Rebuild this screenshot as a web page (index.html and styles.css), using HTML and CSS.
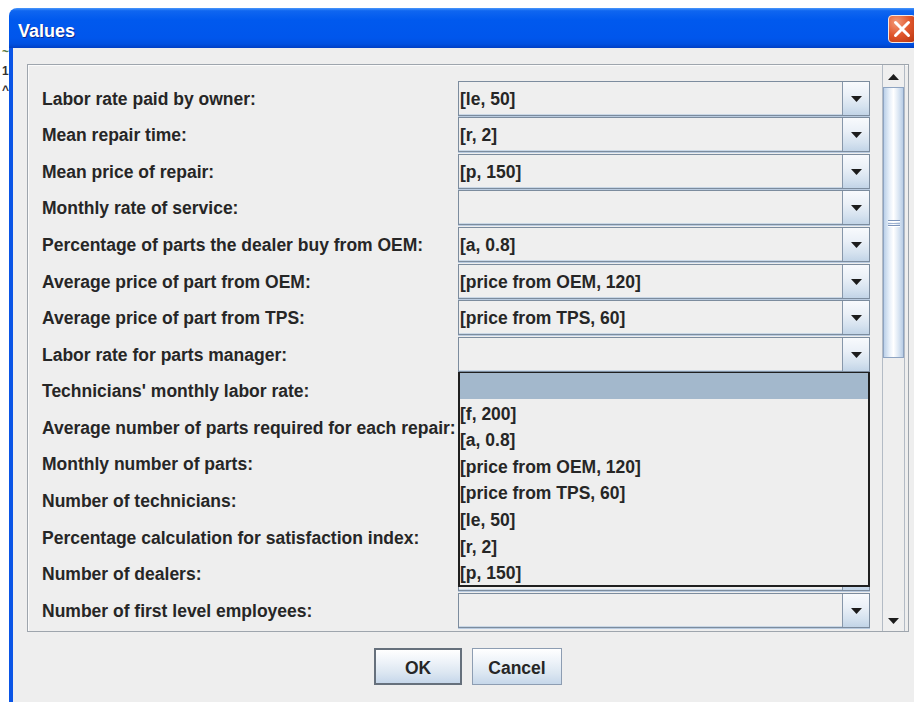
FILE: index.html
```html
<!DOCTYPE html>
<html lang="en">
<head>
<meta charset="utf-8">
<title>Values</title>
<link rel="stylesheet" href="styles.css">
</head>
<body>
<div class="desk"><span class="g1">~</span><span class="g2">1</span><span class="g3">^</span></div>
<div class="window">
  <div class="titlebar">
    <span class="title">Values</span>
    <button class="close" aria-label="Close">
      <svg width="28" height="28" viewBox="0 0 28 28">
        <defs>
          <radialGradient id="closeFill" cx="0.3" cy="0.25" r="0.9">
            <stop offset="0" stop-color="#f39a78"/>
            <stop offset="0.55" stop-color="#e0562c"/>
            <stop offset="1" stop-color="#bf3a14"/>
          </radialGradient>
        </defs>
        <rect x="0.5" y="0.5" width="27" height="27" rx="3.5" fill="url(#closeFill)" stroke="#f4e7e2"/>
        <path d="M7.5 7.5L20.5 20.5M20.5 7.5L7.5 20.5" stroke="#fff" stroke-width="3" stroke-linecap="round"/>
      </svg>
    </button>
  </div>
  <div class="client">
    <div class="scrollpane">
      <div class="viewport">
        <div class="form">
          <label class="lbl">Labor rate paid by owner:</label>
          <div class="combo"><span class="value">[le, 50]</span><span class="arrow"><svg width="11" height="6" viewBox="0 0 11 6"><path d="M0 0H11L5.5 6Z"/></svg></span></div>

          <label class="lbl">Mean repair time:</label>
          <div class="combo"><span class="value">[r, 2]</span><span class="arrow"><svg width="11" height="6" viewBox="0 0 11 6"><path d="M0 0H11L5.5 6Z"/></svg></span></div>

          <label class="lbl">Mean price of repair:</label>
          <div class="combo"><span class="value">[p, 150]</span><span class="arrow"><svg width="11" height="6" viewBox="0 0 11 6"><path d="M0 0H11L5.5 6Z"/></svg></span></div>

          <label class="lbl">Monthly rate of service:</label>
          <div class="combo"><span class="value"></span><span class="arrow"><svg width="11" height="6" viewBox="0 0 11 6"><path d="M0 0H11L5.5 6Z"/></svg></span></div>

          <label class="lbl">Percentage of parts the dealer buy from OEM:</label>
          <div class="combo"><span class="value">[a, 0.8]</span><span class="arrow"><svg width="11" height="6" viewBox="0 0 11 6"><path d="M0 0H11L5.5 6Z"/></svg></span></div>

          <label class="lbl">Average price of part from OEM:</label>
          <div class="combo"><span class="value">[price from OEM, 120]</span><span class="arrow"><svg width="11" height="6" viewBox="0 0 11 6"><path d="M0 0H11L5.5 6Z"/></svg></span></div>

          <label class="lbl">Average price of part from TPS:</label>
          <div class="combo"><span class="value">[price from TPS, 60]</span><span class="arrow"><svg width="11" height="6" viewBox="0 0 11 6"><path d="M0 0H11L5.5 6Z"/></svg></span></div>

          <label class="lbl">Labor rate for parts manager:</label>
          <div class="combo open"><span class="value"></span><span class="arrow"><svg width="11" height="6" viewBox="0 0 11 6"><path d="M0 0H11L5.5 6Z"/></svg></span>
            <div class="popup" role="listbox">
              <div class="opt selected"></div>
              <div class="opt">[f, 200]</div>
              <div class="opt">[a, 0.8]</div>
              <div class="opt">[price from OEM, 120]</div>
              <div class="opt">[price from TPS, 60]</div>
              <div class="opt">[le, 50]</div>
              <div class="opt">[r, 2]</div>
              <div class="opt">[p, 150]</div>
            </div>
          </div>

          <label class="lbl">Technicians' monthly labor rate:</label>
          <div class="combo"><span class="value"></span><span class="arrow"><svg width="11" height="6" viewBox="0 0 11 6"><path d="M0 0H11L5.5 6Z"/></svg></span></div>

          <label class="lbl">Average number of parts required for each repair:</label>
          <div class="combo"><span class="value"></span><span class="arrow"><svg width="11" height="6" viewBox="0 0 11 6"><path d="M0 0H11L5.5 6Z"/></svg></span></div>

          <label class="lbl">Monthly number of parts:</label>
          <div class="combo"><span class="value"></span><span class="arrow"><svg width="11" height="6" viewBox="0 0 11 6"><path d="M0 0H11L5.5 6Z"/></svg></span></div>

          <label class="lbl">Number of technicians:</label>
          <div class="combo"><span class="value"></span><span class="arrow"><svg width="11" height="6" viewBox="0 0 11 6"><path d="M0 0H11L5.5 6Z"/></svg></span></div>

          <label class="lbl">Percentage calculation for satisfaction index:</label>
          <div class="combo"><span class="value"></span><span class="arrow"><svg width="11" height="6" viewBox="0 0 11 6"><path d="M0 0H11L5.5 6Z"/></svg></span></div>

          <label class="lbl">Number of dealers:</label>
          <div class="combo"><span class="value"></span><span class="arrow"><svg width="11" height="6" viewBox="0 0 11 6"><path d="M0 0H11L5.5 6Z"/></svg></span></div>

          <label class="lbl">Number of first level employees:</label>
          <div class="combo"><span class="value"></span><span class="arrow"><svg width="11" height="6" viewBox="0 0 11 6"><path d="M0 0H11L5.5 6Z"/></svg></span></div>
        </div>
      </div>
      <div class="vscroll">
        <div class="sb-btn up"><svg width="11" height="6" viewBox="0 0 11 6"><path d="M0 6H11L5.5 0Z"/></svg></div>
        <div class="thumb"><span class="grip"></span></div>
        <div class="track"></div>
        <div class="sb-btn down"><svg width="11" height="6" viewBox="0 0 11 6"><path d="M0 0H11L5.5 6Z"/></svg></div>
      </div>
    </div>
    <div class="buttons">
      <button class="btn default">OK</button>
      <button class="btn">Cancel</button>
    </div>
  </div>
</div>
</body>
</html>
```
FILE: styles.css
```css
* { box-sizing: border-box; }

html, body {
  margin: 0;
  padding: 0;
}

body {
  width: 914px;
  height: 702px;
  overflow: hidden;
  background: #ffffff;
  display: flex;
  align-items: flex-start;
  font-family: "Liberation Sans", Arial, sans-serif;
  color: #262626;
}

/* bits of the window underneath, peeking out at the left edge */
.desk {
  width: 9px;
  flex: none;
  padding-top: 43px;
  padding-left: 2px;
  display: flex;
  flex-direction: column;
  font-size: 12px;
  line-height: 19px;
  font-weight: bold;
  color: #333;
}
.desk .g1 { color: #5a7d4a; }

/* ---------- window frame ---------- */
.window {
  flex: none;
  width: 918px;
  height: 694px;
  margin-top: 8px;
  display: flex;
  flex-direction: column;
  border-radius: 8px 8px 0 0;
  overflow: hidden;
}

.titlebar {
  flex: none;
  height: 40px;
  display: flex;
  align-items: center;
  justify-content: space-between;
  padding: 0 11px 0 9px;
  background: linear-gradient(#4a97fb 0%, #0f66f0 7%, #0059ee 30%, #0056ec 75%, #0050e0 90%, #003fc4 100%);
}

.title {
  margin-top: 6px;
  font-size: 18px;
  font-weight: bold;
  color: #ffffff;
  text-shadow: 1px 1px 0 #0c2a8f;
}

.close {
  margin: 2px 0 0 0;
  padding: 0;
  border: 0;
  background: none;
  width: 28px;
  height: 28px;
  display: block;
}
.close svg { display: block; }

.client {
  flex: 1;
  display: flex;
  flex-direction: column;
  background: #eeeeee;
  border-left: 4px solid #0a55e6;
  border-right: 4px solid #0a55e6;
  padding: 16px 14px 0 14px;
}

/* ---------- scroll pane ---------- */
.scrollpane {
  flex: none;
  height: 568px;
  display: flex;
  border: 1px solid #9ea5ad;
  box-shadow: inset 1px 1px 0 #fbfbfb;
}

.viewport {
  flex: 1;
  overflow: hidden;
  padding-top: 15px;
}

.form {
  display: grid;
  grid-template-columns: 416px 412px;
  grid-auto-rows: 36.57px;
  padding-left: 14px;
}

.lbl {
  align-self: center;
  padding-top: 2px;
  font-size: 17.5px;
  font-weight: bold;
  white-space: nowrap;
  color: #262626;
}

/* ---------- combo boxes ---------- */
.combo {
  position: relative;
  align-self: center;
  height: 35px;
  display: flex;
  border: 1px solid #7c8c9e;
  box-shadow: 0 1px 0 #b9cbe0, inset 0 -1px 0 #c9d7e6;
  background: #efefef;
}

.value {
  flex: 1;
  display: flex;
  align-items: center;
  padding: 2px 0 0 1px;
  font-size: 17.5px;
  font-weight: bold;
  white-space: nowrap;
  color: #262626;
}

.arrow {
  flex: none;
  width: 27px;
  display: flex;
  align-items: center;
  justify-content: center;
  padding-top: 1px;
  border-left: 1px solid #8797aa;
  background: linear-gradient(#f8fafd 0%, #eaf0f7 40%, #d5e2ef 75%, #c2d4e7 100%);
}
.arrow svg, .sb-btn svg { display: block; fill: #1c1c1c; }

/* drop-down list of the open combo */
.popup {
  position: absolute;
  left: -1px;
  top: calc(100% + 1px);
  width: 412px;
  height: 215px;
  z-index: 5;
  border: 1px solid #1f1f1f;
  border-width: 1px 2px 2px 2px;
  background: #eeeeee;
}

.opt {
  height: 26.6px;
  padding: 3px 0 0 0;
  display: flex;
  align-items: center;
  font-size: 17.5px;
  font-weight: bold;
  white-space: nowrap;
  color: #262626;
}
.opt.selected { background: #a3b8cc; }

/* ---------- vertical scrollbar ---------- */
.vscroll {
  flex: none;
  width: 23px;
  margin-right: 3px;
  display: flex;
  flex-direction: column;
  border-left: 1px solid #b3bbc5;
  border-right: 1px solid #b3bbc5;
  background: #eeeeee;
}

.sb-btn {
  flex: none;
  display: flex;
  align-items: center;
  justify-content: center;
  background: #efefef;
}
.sb-btn.up { height: 22px; padding-top: 2px; }
.sb-btn.down { height: 20px; }

.thumb {
  flex: none;
  height: 271px;
  display: flex;
  align-items: center;
  justify-content: center;
  border: 1px solid #8ea4c2;
  background: linear-gradient(to right, #bcd1e9 0%, #e9f1fa 30%, #ffffff 50%, #dde8f4 75%, #b8cde6 100%);
}

.grip {
  width: 12px;
  height: 6px;
  border-top: 1px solid #7d95bb;
  border-bottom: 1px solid #7d95bb;
  box-shadow: inset 0 1px 0 #ffffff, 0 1px 0 #ffffff;
  position: relative;
}
.grip::after {
  content: "";
  position: absolute;
  left: 0;
  right: 0;
  top: 2px;
  height: 1px;
  background: #9fb3d1;
}

.track { flex: 1; }

/* ---------- dialog buttons ---------- */
.buttons {
  flex: none;
  display: flex;
  justify-content: center;
  gap: 10px;
  margin-top: 16px;
}

.btn {
  height: 37px;
  width: 90px;
  padding: 3px 0 0 0;
  font-family: "Liberation Sans", Arial, sans-serif;
  font-size: 17.5px;
  font-weight: bold;
  color: #262626;
  border: 1px solid #8d9db2;
  background: linear-gradient(#ffffff 0%, #eef3f9 35%, #dbe6f1 70%, #c6d7ea 100%);
}
.btn.default {
  width: 88px;
  border: 2px solid #66707c;
}
```
